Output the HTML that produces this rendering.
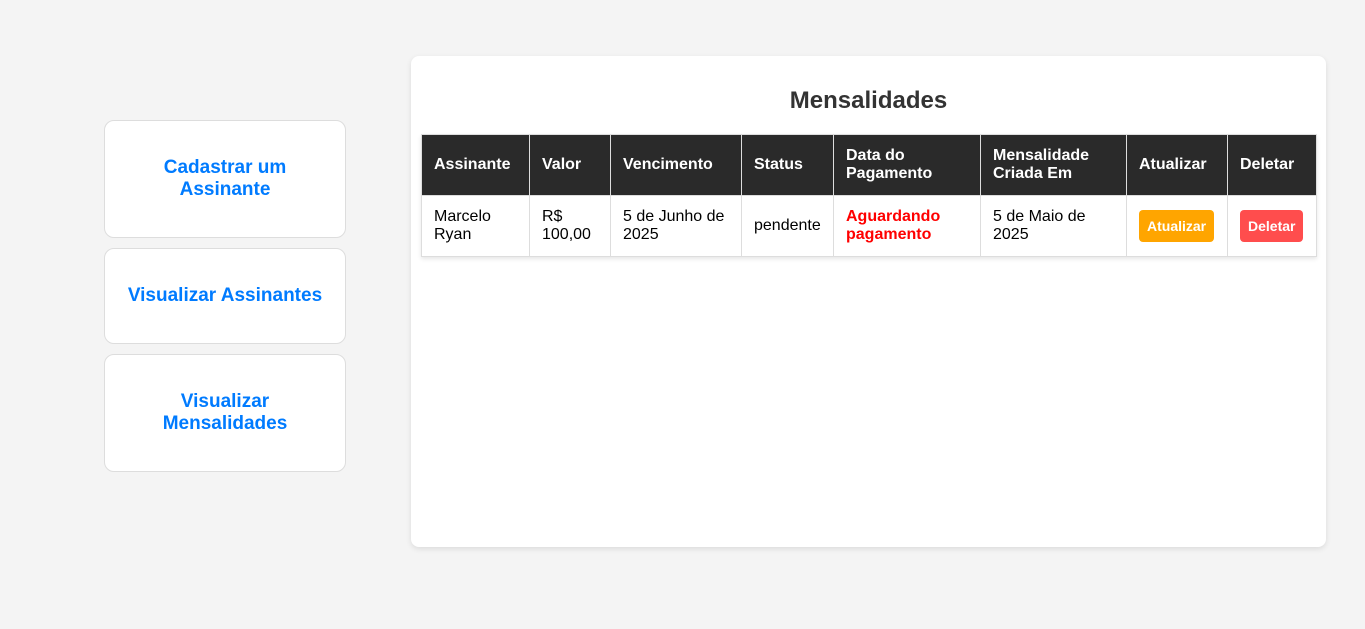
<!DOCTYPE html>
<html><head><meta charset="utf-8"><style>
body{margin:0;background:#f4f4f4;font-family:"Liberation Sans",Arial,sans-serif;width:1365px;height:629px;overflow:hidden;position:relative}
.btn{position:absolute;left:104px;width:240px;background:#fff;border:1px solid #ddd;border-radius:10px;display:flex;align-items:center;justify-content:center;text-align:center;color:#007bff;font-weight:bold;font-size:19px;line-height:22px}
.panel{position:absolute;left:411px;top:56px;width:915px;height:491px;background:#fff;border-radius:8px;box-shadow:0 2px 6px rgba(0,0,0,.1)}
h2{position:absolute;left:0;right:0;top:87px;margin:0;text-align:center;font-size:24px;color:#333;line-height:28px}
table{position:absolute;left:10px;top:78px;border-collapse:collapse;table-layout:fixed;width:895px;box-shadow:0 2px 4px rgba(0,0,0,.1);font-size:16px}
th,td{border:1px solid #ddd;padding:0 12px;text-align:left;line-height:18px}
th{background:#2a2a2a;color:#fff;height:60px;font-size:16px}
td{height:60px;color:#000}
.red{color:red;font-weight:bold}
.b{display:inline-block;color:#fff;font-weight:bold;font-size:14px;border-radius:4px;padding:8px 8px;line-height:16px}
</style></head><body>
<div class="btn" style="top:120px;height:116px">Cadastrar um<br>Assinante</div>
<div class="btn" style="top:248px;height:94px">Visualizar Assinantes</div>
<div class="btn" style="top:354px;height:116px">Visualizar<br>Mensalidades</div>
<div class="panel">
<h2 style="top:31px">Mensalidades</h2>
<table>
<colgroup><col style="width:108px"><col style="width:81px"><col style="width:131px"><col style="width:92px"><col style="width:147px"><col style="width:146px"><col style="width:101px"><col style="width:89px"></colgroup>
<tr><th>Assinante</th><th>Valor</th><th>Vencimento</th><th>Status</th><th>Data do Pagamento</th><th>Mensalidade Criada Em</th><th>Atualizar</th><th>Deletar</th></tr>
<tr><td>Marcelo Ryan</td><td>R$ 100,00</td><td>5 de Junho de 2025</td><td>pendente</td><td class="red">Aguardando pagamento</td><td>5 de Maio de 2025</td><td><span class="b" style="background:#ffa500">Atualizar</span></td><td><span class="b" style="background:#ff4d4d">Deletar</span></td></tr>
</table>
</div>
</body></html>
